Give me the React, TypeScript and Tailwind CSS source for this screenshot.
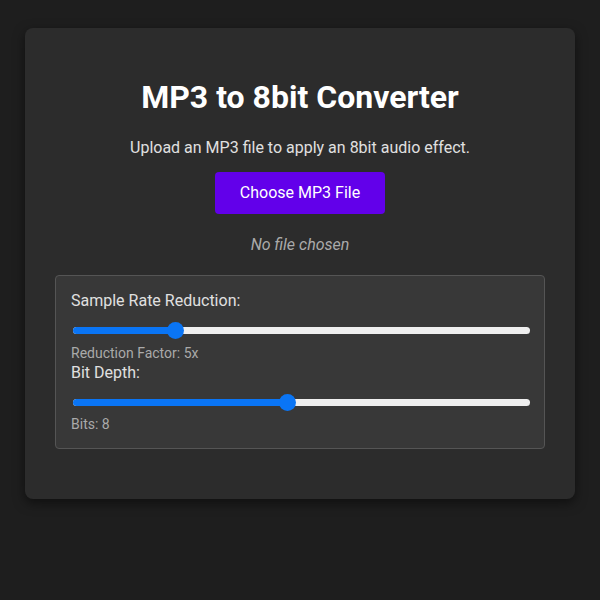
import React from "react";

function Slider({ thumb }: { thumb: number }) {
  return (
    <div className="relative ml-[2px] mr-[-1px] h-[20px]">
      <div className="absolute left-0 right-0 top-[6.5px] h-[7px] rounded-full bg-[#efefef]" />
      <div className="absolute left-0 top-[6.5px] h-[7px] rounded-full bg-[#0a75f5]" style={{ width: thumb }} />
      <div className="absolute top-[1.5px] h-[17px] w-[17px] rounded-full bg-[#0a75f5]" style={{ left: thumb - 8.5 }} />
    </div>
  );
}

export default function App() {
  return (
    <div className="min-h-[600px] w-full bg-[#1e1e1e] pt-[28px]" style={{ fontFamily: "Roboto, 'Liberation Sans', sans-serif" }}>
      <div className="mx-auto w-[550px] rounded-lg bg-[#2c2c2c] px-[30px] pb-[50px] pt-[30px] text-center text-[#e0e0e0] shadow-[0_4px_12px_rgba(0,0,0,0.5)]">
        <h1 className="mb-[22px] mt-[20px] text-[32px] font-bold leading-[38px] text-white">MP3 to 8bit Converter</h1>
        <p className="text-[16px] leading-[20px]">Upload an MP3 file to apply an 8bit audio effect.</p>
        <div className="mt-[14px] flex justify-center">
          <button className="h-[42px] w-[170px] rounded bg-[#6200ea] text-[16px] text-white">Choose MP3 File</button>
        </div>
        <p className="mt-[21px] text-[16px] italic leading-[20px] text-[#aaaaaa]">No file chosen</p>
        <div className="mt-[20px] rounded border border-[#555555] bg-[#383838] px-[15px] pb-[15px] pt-[15px] text-left">
          <label className="block text-[16px] leading-[19px] text-[#e0e0e0]">Sample Rate Reduction:</label>
          <div className="mt-[10px]">
            <Slider thumb={102} />
          </div>
          <div className="mt-[5px] text-[14px] leading-[17px] text-[#aaaaaa]">Reduction Factor: 5x</div>
          <label className="mt-[1px] block text-[16px] leading-[19px] text-[#e0e0e0]">Bit Depth:</label>
          <div className="mt-[10px]">
            <Slider thumb={214} />
          </div>
          <div className="mt-[4px] text-[14px] leading-[17px] text-[#aaaaaa]">Bits: 8</div>
        </div>
      </div>
    </div>
  );
}
